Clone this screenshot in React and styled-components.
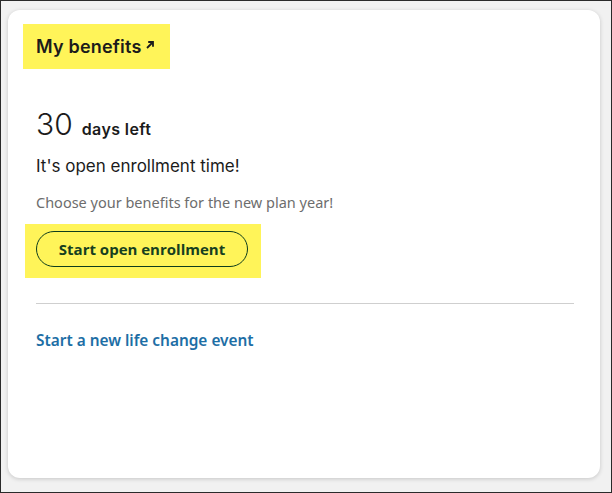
import styled, { createGlobalStyle } from "styled-components";

const GlobalStyle = createGlobalStyle`
    html, body {
        margin: 0;
        padding: 0;
    }
    * {
        box-sizing: border-box;
    }
`;

function ArrowUpRight() {
    return (
        <svg width="10" height="10" viewBox="0 0 10 10" fill="none">
            <path d="M2 8 L8 2 M3.2 2 H8 V6.8" stroke="#1b1b1b" strokeWidth="1.8" />
        </svg>
    );
}

function App() {
    return (
        <Page>
            <GlobalStyle />
            <Card>
                <TitleMark>
                    <Title>
                        My benefits <ArrowUpRight />
                    </Title>
                </TitleMark>
                <CountRow>
                    <Count>30</Count>
                    <CountLabel>days left</CountLabel>
                </CountRow>
                <Headline>It's open enrollment time!</Headline>
                <Note>Choose your benefits for the new plan year!</Note>
                <ButtonMark>
                    <PillButton>Start open enrollment</PillButton>
                </ButtonMark>
                <Divider />
                <TextLink>Start a new life change event</TextLink>
            </Card>
        </Page>
    );
}

const Page = styled.div`
    width: 612px;
    height: 493px;
    border: 1px solid #2a2a2a;
    background: #f1f1f1;
    padding: 9px 11px 14px 7px;
`;

const Card = styled.div`
    height: 100%;
    background: #fff;
    border-radius: 12px;
    box-shadow: 0 1px 4px rgba(0, 0, 0, 0.18);
    padding: 14px 26px 0 15px;
    display: flex;
    flex-direction: column;
    align-items: flex-start;
`;

const TitleMark = styled.div`
    background: #fff459;
    width: 147px;
    height: 45px;
    padding: 0 0 0 13px;
    display: flex;
    align-items: center;
`;

const Title = styled.div`
    font-family: "Inter", sans-serif;
    font-size: 18px;
    font-weight: 600;
    letter-spacing: 0.2px;
    color: #1b1b1b;
    display: flex;
    align-items: flex-start;
    gap: 3px;

    svg {
        margin-top: 4px;
    }
`;

const CountRow = styled.div`
    display: flex;
    align-items: baseline;
    gap: 9px;
    margin: 35px 0 0 13px;
    color: #1b1b1b;
    line-height: 40px;
`;

const Count = styled.div`
    font-family: "Inter", sans-serif;
    font-size: 30px;
    font-weight: 300;
`;

const CountLabel = styled.div`
    font-family: "Inter", sans-serif;
    font-size: 16px;
    font-weight: 600;
    letter-spacing: 0.4px;
`;

const Headline = styled.div`
    font-family: "Inter", sans-serif;
    font-size: 17px;
    line-height: 22px;
    color: #1b1b1b;
    margin: 6px 0 0 13px;
`;

const Note = styled.div`
    font-family: "Noto Sans", sans-serif;
    font-size: 14.5px;
    line-height: 20px;
    color: #6d6d6d;
    margin: 15px 0 0 13px;
`;

const ButtonMark = styled.div`
    background: #fff459;
    width: 236px;
    height: 54px;
    margin: 12px 0 0 2px;
    padding: 7px 0 0 11px;
`;

const PillButton = styled.button`
    width: 212px;
    height: 36px;
    border: 1px solid #0e3d1c;
    border-radius: 18px;
    background: transparent;
    font-family: "Open Sans", sans-serif;
    font-size: 15px;
    font-weight: 700;
    color: #163f1f;
    cursor: pointer;
`;

const Divider = styled.div`
    align-self: stretch;
    height: 1px;
    background: #cfcfcf;
    margin: 25px 0 0 13px;
`;

const TextLink = styled.a`
    font-family: "Noto Sans", sans-serif;
    font-size: 15.4px;
    line-height: 22px;
    font-weight: 600;
    color: #1d6ea5;
    margin: 26px 0 0 13px;
    cursor: pointer;
`;

export default App;
